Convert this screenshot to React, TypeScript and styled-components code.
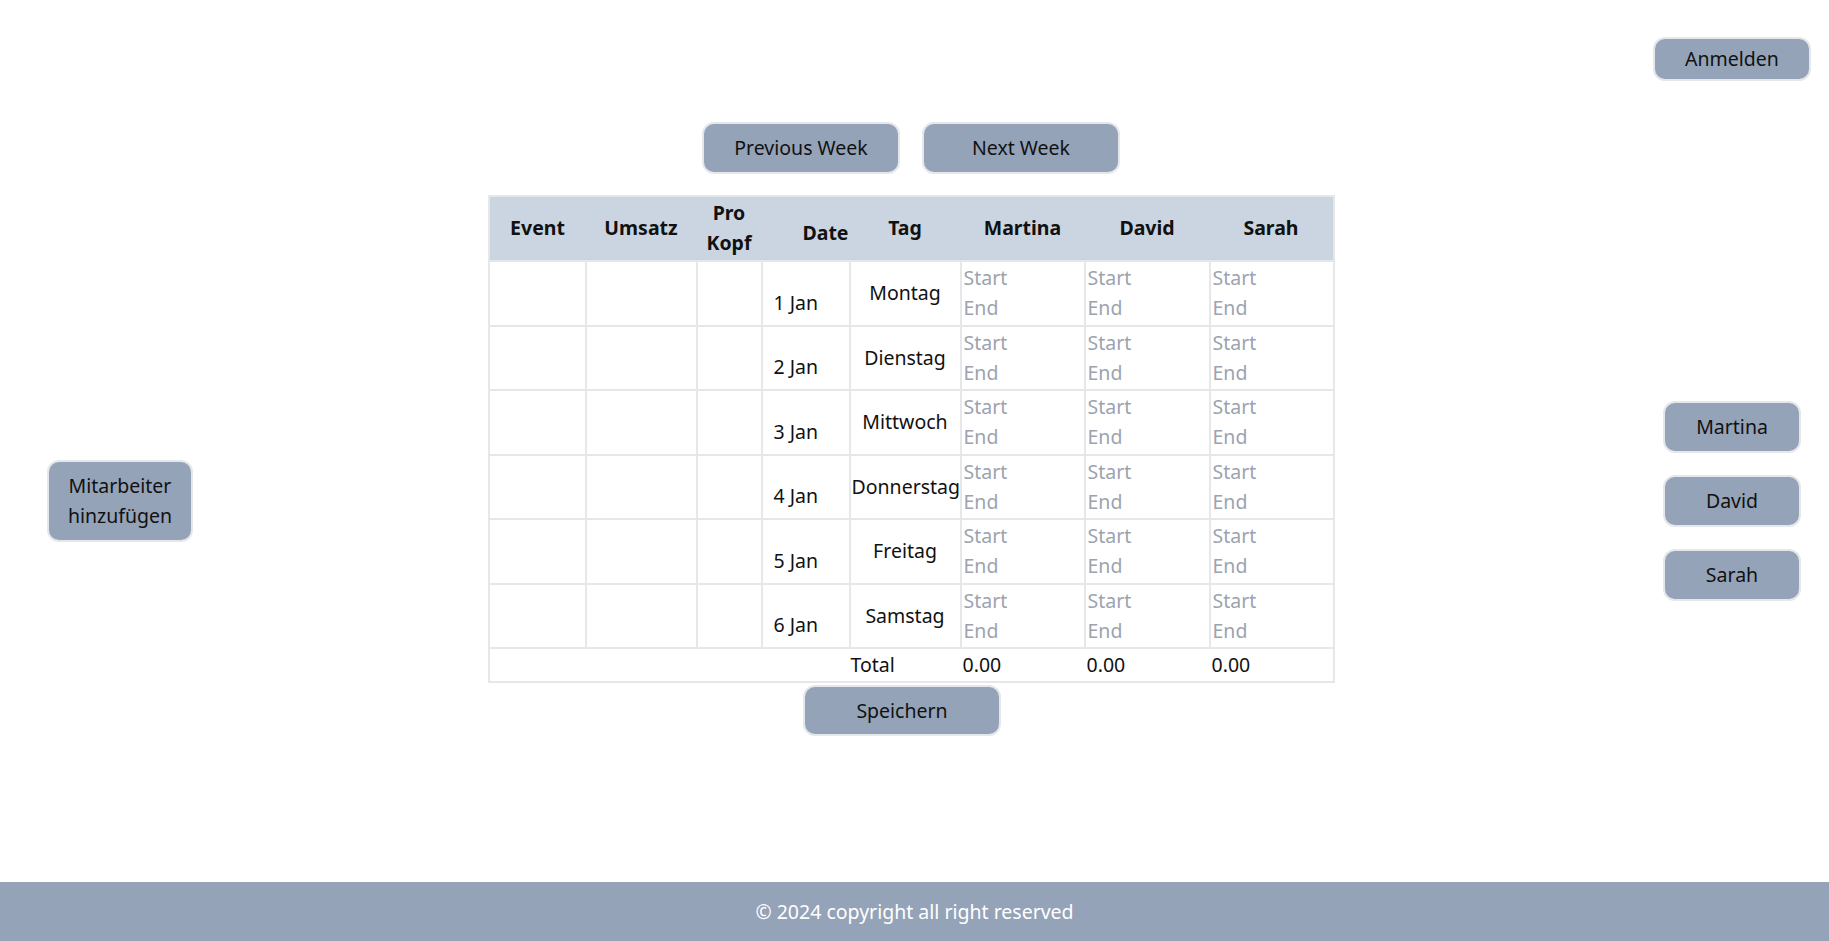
import React from "react";
import styled, { createGlobalStyle } from "styled-components";

const GlobalStyle = createGlobalStyle`
  html, body { margin: 0; padding: 0; }
  body {
    font-family: "Noto Sans", "Open Sans", sans-serif;
    font-size: 19.5px;
    line-height: 30px;
    color: #111;
    background: #fff;
  }
  * { box-sizing: border-box; }
`;

const Page = styled.div`
  min-height: 100vh;
  display: flex;
  flex-direction: column;
`;

const TopBar = styled.header`
  display: flex;
  justify-content: flex-end;
  padding: 37px 18px 39px 0;
`;

const Main = styled.main`
  flex: 1;
  display: grid;
  grid-template-columns: 1fr auto 1fr;
`;

const LeftAside = styled.aside`
  justify-self: start;
  align-self: center;
  padding-left: 47px;
`;

const RightAside = styled.aside`
  justify-self: end;
  align-self: center;
  padding-right: 28px;
  display: flex;
  flex-direction: column;
  gap: 22px;
`;

const Center = styled.section`
  padding-top: 2px;
  margin-right: 7px;
  display: flex;
  flex-direction: column;
  align-items: center;
`;

const Button = styled.button<{ $w: number; $h: number }>`
  width: ${(p) => p.$w}px;
  height: ${(p) => p.$h}px;
  background: #94a3b8;
  border: 2px solid #e5e7eb;
  border-radius: 12px;
  font-family: inherit;
  font-size: 19.5px;
  line-height: 30px;
  color: #111;
  padding: 0 10px;
  cursor: pointer;
  text-align: center;
`;

const NavRow = styled.div`
  display: flex;
  gap: 22px;
  margin-bottom: 21px;
`;

const SaveRow = styled.div`
  display: flex;
  justify-content: center;
  margin-top: 2px;
  padding-right: 18px;
`;

const Table = styled.table`
  width: 845px;
  table-layout: fixed;
  border-collapse: collapse;
  border: 2px solid #e5e7eb;
`;

const HeadRow = styled.tr`
  background: #cbd5e1;
`;

const Th = styled.th<{ $align?: string; $shift?: number }>`
  font-weight: 700;
  padding: ${(p) => 0.5 + (p.$shift || 0)}px ${(p) => (p.$align === "right" ? 1 : 2)}px 2.5px 2px;
  text-align: ${(p) => p.$align || "center"};
  border: none;
  vertical-align: middle;
  white-space: normal;
`;

const Td = styled.td`
  border: 2px solid #e5e7eb;
  padding: 1.25px 1px;
  vertical-align: middle;
`;

const DateTd = styled(Td)`
  padding: 19px 2px 0 11px;
  white-space: nowrap;
`;

const TagTd = styled(Td)`
  text-align: center;
  padding: 0 1px;
  white-space: nowrap;
`;

const TimeInput = styled.input`
  display: block;
  width: 100%;
  height: 30px;
  border: none;
  outline: none;
  background: transparent;
  padding: 0 1px;
  font-family: inherit;
  font-size: 19.5px;
  line-height: 30px;
  color: #111;
  &::placeholder { color: #9ca3af; }
`;

const TotalTd = styled.td<{ $pl?: number }>`
  border-top: 2px solid #e5e7eb;
  border-left: none;
  border-right: none;
  padding: 1px 2px 1px ${(p) => p.$pl ?? 2}px;
  text-align: left;
  white-space: nowrap;
`;

const Footer = styled.footer`
  height: 59px;
  background: #94a3b8;
  color: #fff;
  display: flex;
  align-items: center;
  justify-content: center;
`;

const colWidths = [97, 111, 65, 88, 111, 124, 125, 124];
const employees = ["Martina", "David", "Sarah"];
const days = [
  { date: "1 Jan", tag: "Montag" },
  { date: "2 Jan", tag: "Dienstag" },
  { date: "3 Jan", tag: "Mittwoch" },
  { date: "4 Jan", tag: "Donnerstag" },
  { date: "5 Jan", tag: "Freitag" },
  { date: "6 Jan", tag: "Samstag" },
];

export default function App() {
  return (
    <Page>
      <GlobalStyle />
      <TopBar>
        <Button $w={158} $h={44}>Anmelden</Button>
      </TopBar>
      <Main>
        <LeftAside>
          <Button $w={146} $h={82}>Mitarbeiter hinzufügen</Button>
        </LeftAside>
        <Center>
          <NavRow>
            <Button $w={198} $h={52}>Previous Week</Button>
            <Button $w={198} $h={52}>Next Week</Button>
          </NavRow>
          <Table>
            <colgroup>
              {colWidths.map((w, i) => (
                <col key={i} style={{ width: w }} />
              ))}
            </colgroup>
            <thead>
              <HeadRow>
                <Th>Event</Th>
                <Th>Umsatz</Th>
                <Th>Pro Kopf</Th>
                <Th $align="right" $shift={11}>Date</Th>
                <Th>Tag</Th>
                {employees.map((e) => (
                  <Th key={e}>{e}</Th>
                ))}
              </HeadRow>
            </thead>
            <tbody>
              {days.map((d) => (
                <tr key={d.date}>
                  <Td />
                  <Td />
                  <Td />
                  <DateTd>{d.date}</DateTd>
                  <TagTd>{d.tag}</TagTd>
                  {employees.map((e) => (
                    <Td key={e}>
                      <TimeInput placeholder="Start" />
                      <TimeInput placeholder="End" />
                    </Td>
                  ))}
                </tr>
              ))}
              <tr>
                <TotalTd colSpan={4} />
                <TotalTd $pl={1}>Total</TotalTd>
                {employees.map((e) => (
                  <TotalTd key={e} $pl={2}>0.00</TotalTd>
                ))}
              </tr>
            </tbody>
          </Table>
          <SaveRow>
            <Button $w={198} $h={51}>Speichern</Button>
          </SaveRow>
        </Center>
        <RightAside>
          {employees.map((e) => (
            <Button key={e} $w={138} $h={52}>{e}</Button>
          ))}
        </RightAside>
      </Main>
      <Footer>© 2024 copyright all right reserved</Footer>
    </Page>
  );
}
